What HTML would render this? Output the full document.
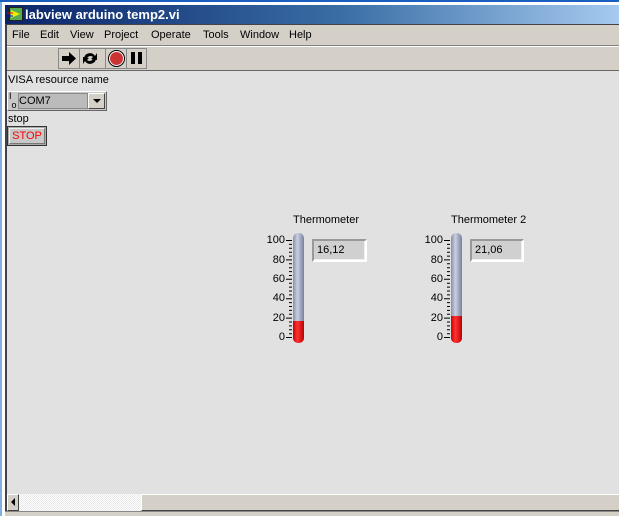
<!DOCTYPE html>
<html><head><style>
*{margin:0;padding:0;box-sizing:border-box}
body{width:619px;height:516px;position:relative;overflow:hidden;background:#fff;font-family:"Liberation Sans",Arial,sans-serif;font-size:11px;color:#000}
.a{position:absolute}
.lbl{position:absolute;font-size:11px;text-align:right;width:24px}
</style></head><body>
<div class="a" style="left:0;top:0;width:2px;height:516px;background:#7fb0e0"></div>
<div class="a" style="left:0;top:0;width:619px;height:2px;background:#1a5fc0"></div>
<div class="a" style="left:5px;top:5px;width:614px;height:19px;background:linear-gradient(90deg,#0a246a,#3a6ea5 55%,#a6caf0)"></div>
<svg class="a" style="left:7px;top:6px" width="17" height="16"><rect x="1" y="1" width="15" height="14" fill="#222"/><rect x="3" y="2" width="12" height="12" fill="#5a5"/><polygon points="4,4 13,8 4,12" fill="#ee0"/><line x1="0" y1="7" x2="6" y2="7" stroke="#f00"/><line x1="0" y1="10" x2="6" y2="10" stroke="#00f"/></svg>
<div class="a" style="left:25px;top:7px;color:#fff;font-weight:bold;font-size:13px">labview arduino temp2.vi</div>
<div class="a" style="left:5px;top:24px;width:614px;height:47px;background:#d4d0c8;border-left:2px solid #444;border-top:1px solid #444"></div>
<div class="a" style="left:7px;top:45px;width:612px;height:1px;background:#808080"></div>
<div class="a" style="left:7px;top:46px;width:612px;height:1px;background:#fff"></div>
<div class="a" style="left:7px;top:70px;width:612px;height:1px;background:#666"></div>
<div class="a" style="left:12px;top:29px">File</div>
<div class="a" style="left:40px;top:29px">Edit</div>
<div class="a" style="left:70px;top:29px">View</div>
<div class="a" style="left:104px;top:29px">Project</div>
<div class="a" style="left:151px;top:29px">Operate</div>
<div class="a" style="left:203px;top:29px">Tools</div>
<div class="a" style="left:240px;top:29px">Window</div>
<div class="a" style="left:289px;top:29px">Help</div>
<div class="a" style="left:58px;top:48px;width:89px;height:21px;border:1px solid #888"></div>
<div class="a" style="left:79px;top:48px;width:1px;height:21px;background:#888"></div>
<div class="a" style="left:105px;top:48px;width:1px;height:21px;background:#888"></div>
<div class="a" style="left:126px;top:48px;width:1px;height:21px;background:#888"></div>
<svg class="a" style="left:60px;top:50px" width="18" height="17"><rect x="2" y="6" width="8" height="5" fill="#000"/><polygon points="9,2 16,8.5 9,15" fill="#000"/></svg>
<svg class="a" style="left:81px;top:50px" width="18" height="17"><path d="M3 8 A6 6 0 0 1 14 6 L16 3 L16 10 L10 9 L12 7 A4 4 0 0 0 6 8Z" fill="#000"/><path d="M15 9 A6 6 0 0 1 4 11 L2 14 L2 7 L8 8 L6 10 A4 4 0 0 0 12 9Z" fill="#000"/></svg>
<svg class="a" style="left:107px;top:49px" width="19" height="19"><circle cx="9.5" cy="9.5" r="8" fill="#fff" stroke="#000"/><circle cx="9.5" cy="9.5" r="6.5" fill="#c33"/></svg>
<div class="a" style="left:131px;top:52px;width:4px;height:12px;background:#000"></div>
<div class="a" style="left:138px;top:52px;width:4px;height:12px;background:#000"></div>
<div class="a" style="left:5px;top:71px;width:614px;height:423px;background:#e1e1e1;border-left:2px solid #444"></div>
<div class="a" style="left:8px;top:74px">VISA resource name</div>
<div class="a" style="left:7px;top:91px;width:100px;height:20px;background:#c8c8c8;border:1px solid;border-color:#fff #666 #666 #fff"></div>
<div class="a" style="left:9px;top:92px;font-size:9px;line-height:9px">I<br>&nbsp;o</div>
<div class="a" style="left:18px;top:93px;width:70px;height:16px;background:#bbb;border:1px solid #888"></div>
<div class="a" style="left:19px;top:95px">COM7</div>
<div class="a" style="left:88px;top:93px;width:17px;height:16px;background:#d4d0c8;border:1px solid;border-color:#fff #444 #444 #fff"></div>
<div class="a" style="left:93px;top:99px;width:0;height:0;border-left:4px solid transparent;border-right:4px solid transparent;border-top:4px solid #000"></div>
<div class="a" style="left:8px;top:113px">stop</div>
<div class="a" style="left:7px;top:126px;width:40px;height:20px;background:#aaa;border:1px solid #333"></div>
<div class="a" style="left:9px;top:128px;width:36px;height:16px;background:#c8c8c8;border:1px solid;border-color:#eee #777 #777 #eee;color:#f00;text-align:center;line-height:15px">STOP</div>

<div class="a" style="left:293px;top:214px">Thermometer</div>
<div class="a" style="left:451px;top:214px">Thermometer 2</div>

<div class="a" style="left:293px;top:233px;width:11px;height:110px;border-radius:5px;background:linear-gradient(90deg,#8890a8,#c8d0e0 40%,#7880a0)"></div>
<div class="a" style="left:293px;top:321px;width:11px;height:22px;border-radius:0 0 5px 5px;background:linear-gradient(90deg,#c00,#f33 40%,#b00)"></div>
<div class="a" style="left:451px;top:233px;width:11px;height:110px;border-radius:5px;background:linear-gradient(90deg,#8890a8,#c8d0e0 40%,#7880a0)"></div>
<div class="a" style="left:451px;top:316px;width:11px;height:27px;border-radius:0 0 5px 5px;background:linear-gradient(90deg,#c00,#f33 40%,#b00)"></div>

<div class="lbl" style="left:261px;top:234px">100</div>
<div class="lbl" style="left:261px;top:254px">80</div>
<div class="lbl" style="left:261px;top:273px">60</div>
<div class="lbl" style="left:261px;top:292px">40</div>
<div class="lbl" style="left:261px;top:312px">20</div>
<div class="lbl" style="left:261px;top:331px">0</div>
<div class="lbl" style="left:419px;top:234px">100</div>
<div class="lbl" style="left:419px;top:254px">80</div>
<div class="lbl" style="left:419px;top:273px">60</div>
<div class="lbl" style="left:419px;top:292px">40</div>
<div class="lbl" style="left:419px;top:312px">20</div>
<div class="lbl" style="left:419px;top:331px">0</div>
<svg class="a" style="left:286px;top:238px" width="8" height="102"><g stroke="#000" stroke-width="1">
<path d="M0 2.5H6M0 21.9H6M0 41.3H6M0 60.7H6M0 80.1H6M0 99.5H6"/>
<path d="M3 6.4H6M3 10.3H6M3 14.2H6M3 18.1H6M3 25.8H6M3 29.7H6M3 33.6H6M3 37.5H6M3 45.2H6M3 49.1H6M3 53H6M3 56.9H6M3 64.6H6M3 68.5H6M3 72.4H6M3 76.3H6M3 84H6M3 87.9H6M3 91.8H6M3 95.7H6"/></g></svg>
<svg class="a" style="left:444px;top:238px" width="8" height="102"><g stroke="#000" stroke-width="1">
<path d="M0 2.5H6M0 21.9H6M0 41.3H6M0 60.7H6M0 80.1H6M0 99.5H6"/>
<path d="M3 6.4H6M3 10.3H6M3 14.2H6M3 18.1H6M3 25.8H6M3 29.7H6M3 33.6H6M3 37.5H6M3 45.2H6M3 49.1H6M3 53H6M3 56.9H6M3 64.6H6M3 68.5H6M3 72.4H6M3 76.3H6M3 84H6M3 87.9H6M3 91.8H6M3 95.7H6"/></g></svg>

<div class="a" style="left:312px;top:239px;width:55px;height:23px;background:#f0f0f0;border:2px solid;border-color:#999 #fff #fff #999"></div>
<div class="a" style="left:314px;top:241px;width:50px;height:18px;background:#d0d0d0;padding:3px 3px">16,12</div>
<div class="a" style="left:470px;top:239px;width:54px;height:23px;background:#f0f0f0;border:2px solid;border-color:#999 #fff #fff #999"></div>
<div class="a" style="left:472px;top:241px;width:49px;height:18px;background:#d0d0d0;padding:3px 3px">21,06</div>

<div class="a" style="left:5px;top:494px;width:614px;height:17px;background:#d4d0c8;border-left:2px solid #444"></div>
<div class="a" style="left:7px;top:494px;width:12px;height:17px;background:#d4d0c8;border:1px solid;border-color:#fff #444 #444 #fff"></div>
<div class="a" style="left:11px;top:498px;width:0;height:0;border-top:4px solid transparent;border-bottom:4px solid transparent;border-right:4px solid #000"></div>
<div class="a" style="left:19px;top:494px;width:122px;height:17px;background:repeating-conic-gradient(#e8e8e8 0 25%,#fff 0 50%) 0 0/2px 2px"></div>
<div class="a" style="left:141px;top:494px;width:478px;height:17px;background:#d4d0c8;border-top:1px solid #fff;border-left:1px solid #fff;border-bottom:1px solid #444"></div>
<div class="a" style="left:5px;top:511px;width:614px;height:5px;background:#d4d0c8;border-top:1px solid #888"></div>
</body></html>
